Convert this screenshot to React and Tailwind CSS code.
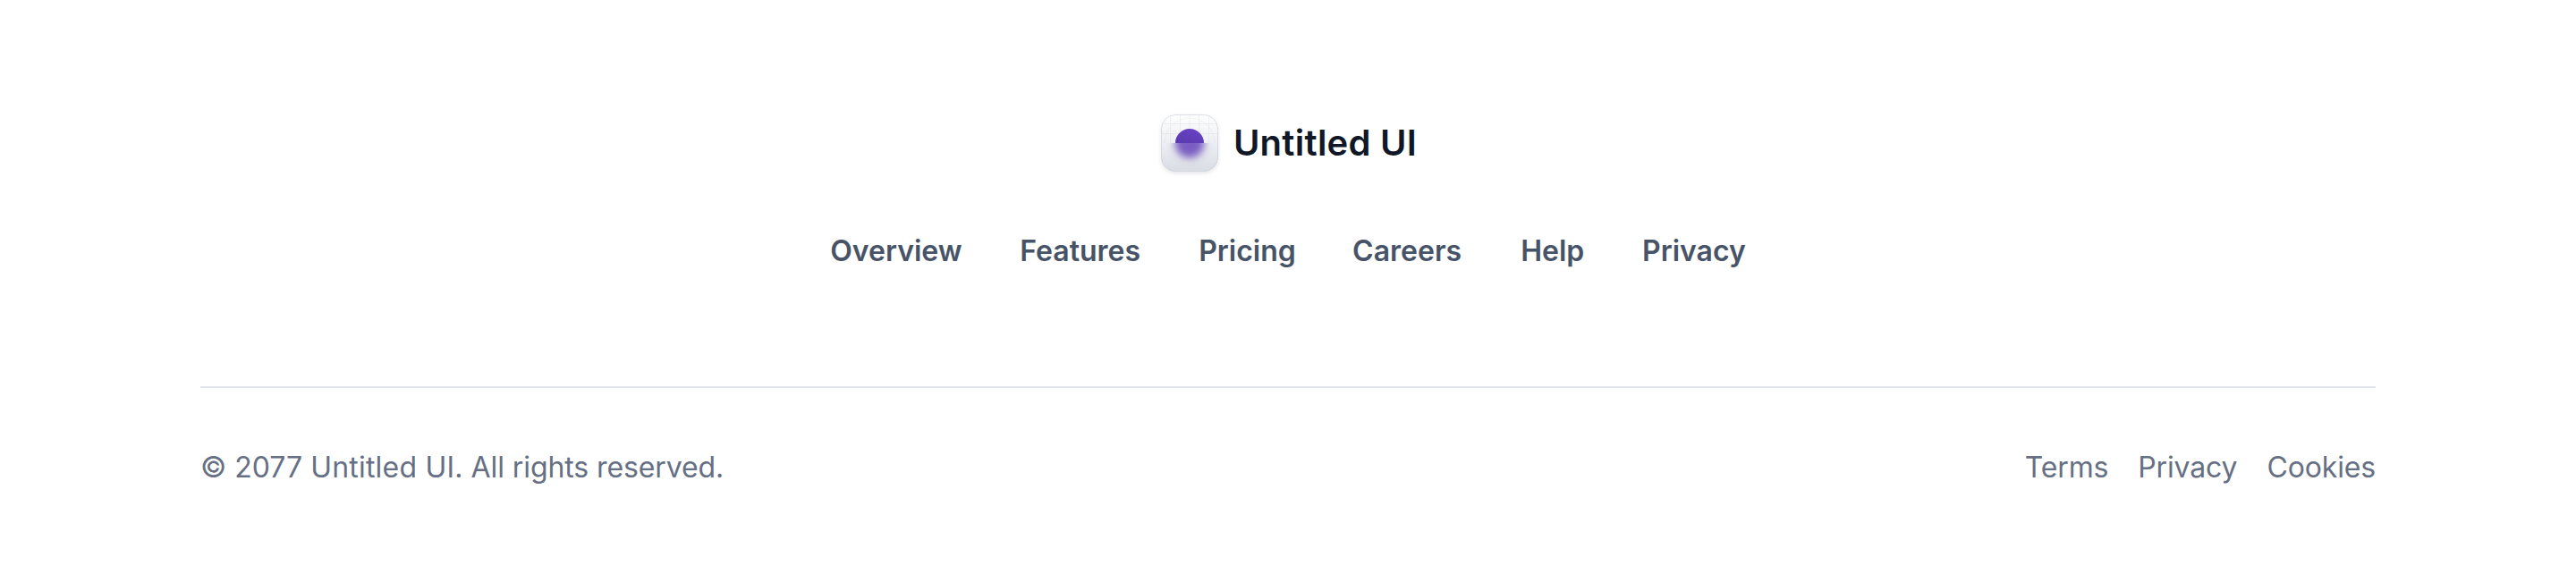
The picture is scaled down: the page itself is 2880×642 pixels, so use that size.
function Logo() {
  return (
    <svg width="64" height="64" viewBox="0 0 64 64" className="shrink-0 overflow-visible">
      <defs>
        <linearGradient id="tile" x1="0" y1="0" x2="0" y2="1">
          <stop offset="0" stopColor="#ffffff" />
          <stop offset="1" stopColor="#d9dde4" />
        </linearGradient>
        <linearGradient id="orb" x1="0.2" y1="1" x2="0.8" y2="0">
          <stop offset="0" stopColor="#5b3bae" />
          <stop offset="1" stopColor="#6941c6" />
        </linearGradient>
        <filter id="soft" x="-50%" y="-50%" width="200%" height="200%">
          <feGaussianBlur stdDeviation="4" />
        </filter>
        <filter id="shadow" x="-30%" y="-30%" width="160%" height="160%">
          <feDropShadow dx="0" dy="2" stdDeviation="2" floodColor="#101828" floodOpacity="0.1" />
        </filter>
        <clipPath id="lower">
          <rect x="0" y="32" width="64" height="32" />
        </clipPath>
        <clipPath id="upper">
          <rect x="0" y="0" width="64" height="32" />
        </clipPath>
      </defs>
      <rect width="64" height="64" rx="16" fill="url(#tile)" filter="url(#shadow)" />
      <g clipPath="url(#upper)" fill="none" stroke="#d0d5dd" strokeOpacity="0.3">
        <path d="M10.5 2v30M21.5 0v32M32 0v32M42.5 0v32M53.5 2v30M2 10.5h60M0 21.5h64" />
        <circle cx="32" cy="32" r="28" strokeDasharray="3 1" />
      </g>
      <path d="M16 32a16 16 0 0 1 32 0z" fill="url(#orb)" />
      <g clipPath="url(#lower)">
        <circle cx="32" cy="32" r="16.5" fill="#623db8" fillOpacity="0.82" filter="url(#soft)" />
      </g>
      <rect x="0.5" y="0.5" width="63" height="63" rx="15.5" fill="none" stroke="#d0d5dd" strokeOpacity="0.75" />
    </svg>
  );
}

export default function App() {
  return (
    <footer className="flex h-[642px] w-full flex-col bg-white px-[224px] pt-32 font-['Inter',sans-serif]">
      <div className="flex flex-col items-center">
        <div className="flex h-16 items-center gap-[17px] pl-[2px]">
          <Logo />
          <span className="text-[40px] font-semibold leading-none tracking-[0.25px] text-[#101828]">Untitled UI</span>
        </div>
        <nav className="mt-16 flex h-12 items-center gap-16 pt-0.5 text-[32px] font-semibold text-[#475467]">
          <a>Overview</a>
          <a className="ml-[0.7px]">Features</a>
          <a className="ml-[1.1px]">Pricing</a>
          <a className="-ml-[0.7px]">Careers</a>
          <a className="ml-[2px]">Help</a>
          <a className="ml-[0.7px]">Privacy</a>
        </nav>
      </div>
      <div className="mt-32 flex items-center justify-between border-t-2 border-[#e2e6ec] pt-[65px] text-[32px] leading-[48px] text-[#667085]">
        <p>
          © 2077 <span className="tracking-[0.2px]">Untitled UI.</span>{' '}
          <span className="tracking-[-0.1px]">All rights reserved.</span>
        </p>
        <div className="flex gap-[33px] tracking-[-0.15px]">
          <a>Terms</a>
          <a>Privacy</a>
          <a>Cookies</a>
        </div>
      </div>
    </footer>
  );
}
